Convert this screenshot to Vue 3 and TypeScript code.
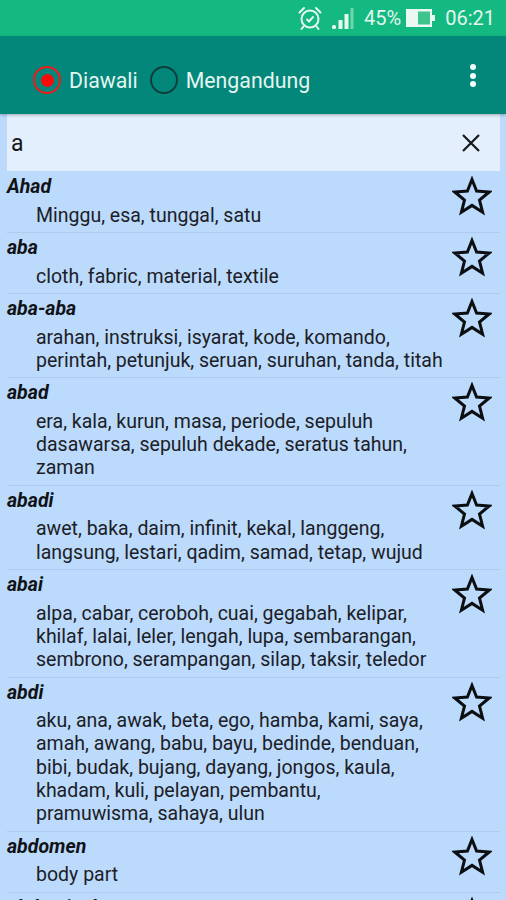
<script setup lang="ts">
interface Entry { word: string; lines: string[] }
const entries: Entry[] = [
  { word: 'Ahad', lines: ['Minggu, esa, tunggal, satu'] },
  { word: 'aba', lines: ['cloth, fabric, material, textile'] },
  { word: 'aba-aba', lines: ['arahan, instruksi, isyarat, kode, komando,', 'perintah, petunjuk, seruan, suruhan, tanda, titah'] },
  { word: 'abad', lines: ['era, kala, kurun, masa, periode, sepuluh', 'dasawarsa, sepuluh dekade, seratus tahun,', 'zaman'] },
  { word: 'abadi', lines: ['awet, baka, daim, infinit, kekal, langgeng,', 'langsung, lestari, qadim, samad, tetap, wujud'] },
  { word: 'abai', lines: ['alpa, cabar, ceroboh, cuai, gegabah, kelipar,', 'khilaf, lalai, leler, lengah, lupa, sembarangan,', 'sembrono, serampangan, silap, taksir, teledor'] },
  { word: 'abdi', lines: ['aku, ana, awak, beta, ego, hamba, kami, saya,', 'amah, awang, babu, bayu, bedinde, benduan,', 'bibi, budak, bujang, dayang, jongos, kaula,', 'khadam, kuli, pelayan, pembantu,', 'pramuwisma, sahaya, ulun'] },
  { word: 'abdomen', lines: ['body part'] },
  { word: 'abdominal', lines: ['perut'] },
]
</script>

<template>
  <div class="screen">
    <div class="status">
      <svg class="alarm" viewBox="0 0 26 26" width="26" height="26" fill="none" stroke="#e6f7ef" stroke-width="2">
        <circle cx="13" cy="14" r="8.5" />
        <path d="M9.5 14l2.5 2.5 4.5-5" />
        <path d="M2.5 7.5L7 3M23.5 7.5L19 3M6.5 21.5L4.5 24M19.5 21.5l2 2.5" stroke-linecap="round" />
      </svg>
      <svg class="signal" viewBox="0 0 24 24" width="24" height="24">
        <rect x="1" y="19" width="4" height="4" rx="1.5" fill="#e6f7ef" />
        <rect x="7.5" y="14" width="4" height="9" fill="#e6f7ef" />
        <rect x="13.5" y="8" width="4" height="15" fill="#e6f7ef" />
        <rect x="19.5" y="2" width="3" height="21" fill="#6fd6ac" />
      </svg>
      <span class="pct">45%</span>
      <svg class="battery" viewBox="0 0 30 20" width="30" height="20">
        <rect x="0" y="1" width="26" height="18" fill="#e9f8f1" />
        <rect x="12" y="3.5" width="12" height="13" fill="#3fc48f" />
        <rect x="26" y="7" width="3" height="6" fill="#e9f8f1" />
      </svg>
      <span class="time">06:21</span>
    </div>

    <header class="toolbar">
      <label class="radio">
        <span class="ring on"><span class="dot"></span></span>
        <span class="radio-text">Diawali</span>
      </label>
      <label class="radio second">
        <span class="ring"></span>
        <span class="radio-text">Mengandung</span>
      </label>
      <span class="menu"><i></i><i></i><i></i></span>
    </header>

    <main class="content">
      <div class="search">
        <span class="query">a</span>
        <svg viewBox="0 0 24 24" width="24" height="24" fill="none" stroke="#15171a" stroke-width="2.2">
          <path d="M4 4l16 16M20 4L4 20" />
        </svg>
      </div>
      <ul class="list">
        <li v-for="e in entries" :key="e.word" class="row">
          <div class="texts">
            <div class="word">{{ e.word }}</div>
            <div class="meaning">
              <div v-for="l in e.lines" :key="l" class="line">{{ l }}</div>
            </div>
          </div>
          <svg class="star" viewBox="0 0 40 40" width="40" height="40" fill="none" stroke="#0c0e12" stroke-width="3" stroke-linejoin="miter">
            <path d="M20 3.5l4.6 11.6 12.6.9-9.7 8 3.1 12.2L20 29.4l-10.6 6.8 3.1-12.2-9.7-8 12.6-.9z" />
          </svg>
        </li>
      </ul>
    </main>
  </div>
</template>

<style>
html, body { margin: 0; padding: 0; }
</style>

<style scoped>
.screen {
  width: 506px;
  height: 900px;
  overflow: hidden;
  display: flex;
  flex-direction: column;
  background: #bbdafc;
  font-family: Roboto, "Liberation Sans", sans-serif;
}
.status {
  height: 36px;
  flex: none;
  box-sizing: border-box;
  background: #14b981;
  display: flex;
  align-items: center;
  justify-content: flex-end;
  padding-right: 11px;
  color: #e3f6ee;
  font-size: 20px;
}
.alarm { margin-right: 8px; }
.signal { margin-right: 9px; }
.pct { margin-right: 5px; }
.battery { margin-right: 9px; }
.toolbar {
  height: 78px;
  flex: none;
  box-sizing: border-box;
  background: #03877a;
  display: flex;
  align-items: center;
  padding: 10px 0 0 33px;
  color: #e4f5f1;
  font-size: 21.3px;
  box-shadow: 0 1px 3px rgba(0, 0, 0, 0.3);
  position: relative;
  z-index: 1;
}
.radio { display: flex; align-items: center; gap: 8px; }
.second { margin-left: 12px; }
.ring {
  width: 28px;
  height: 28px;
  box-sizing: border-box;
  border: 2px solid #0c3f3d;
  border-radius: 50%;
  display: flex;
  align-items: center;
  justify-content: center;
}
.ring.on { border-color: #f01a1a; }
.dot { width: 13px; height: 13px; border-radius: 50%; background: #fb0a0a; }
.menu {
  margin-left: auto;
  margin-right: 30px;
  display: flex;
  flex-direction: column;
  gap: 2.5px;
  margin-top: -9px;
}
.menu i { width: 6px; height: 6px; border-radius: 50%; background: #f2fbf9; display: block; }
.content { flex: 1; min-height: 0; padding: 0 6px 0 7px; }
.search {
  height: 57px;
  box-sizing: border-box;
  background: #e3effd;
  display: flex;
  align-items: center;
  justify-content: space-between;
  padding: 0 17px 0 4px;
  font-size: 23px;
  color: #14161a;
}
.query { padding-top: 2px; }
.list { list-style: none; margin: 0; padding: 1px 0 0; }
.row {
  display: flex;
  justify-content: space-between;
  border-bottom: 1px solid #aecbeb;
  color: #1c2026;
  box-sizing: border-box;
}
.texts { padding-top: 3px; flex: 1; min-width: 0; }
.word {
  font-size: 19.5px;
  font-weight: 700;
  font-style: italic;
  line-height: 24px;
  color: #101216;
}
.meaning { padding: 0 0 5.25px 29px; font-size: 19.5px; line-height: 23.25px; white-space: nowrap; margin-top: 4.5px; }
.star { flex: none; margin: 4px 8px 0 0; }
</style>
